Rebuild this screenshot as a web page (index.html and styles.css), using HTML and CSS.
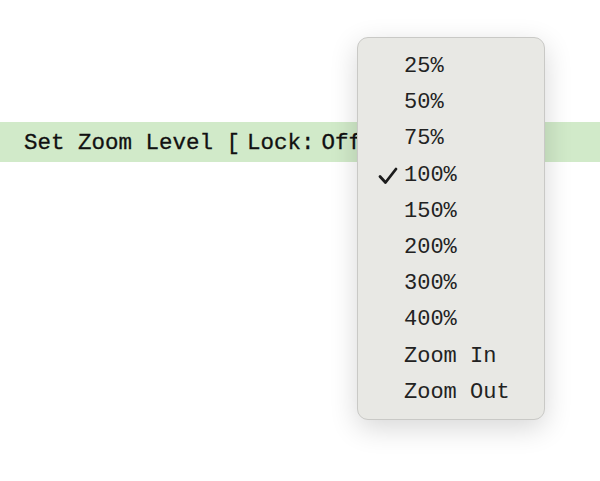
FILE: index.html
```html
<!DOCTYPE html>
<html lang="en">
<head>
    <meta charset="UTF-8">
    <meta name="viewport" content="width=device-width, initial-scale=1.0">
    <title>Set Zoom Level</title>
    <link rel="stylesheet" href="styles.css">
</head>
<body>

    <div class="bar">Set Zoom Level <span class="lock">[ Lock: Off</span></div>

    <ul class="menu">
        <li>25%</li>
        <li>50%</li>
        <li>75%</li>
        <li class="checked">
            <svg class="check" width="20" height="18" viewBox="0 0 20 18"><path d="M2 9.5 L7.5 15.5 L18 2" fill="none" stroke="#1c1c1c" stroke-width="2.8" stroke-linecap="round" stroke-linejoin="round"/></svg>
            100%
        </li>
        <li>150%</li>
        <li>200%</li>
        <li>300%</li>
        <li>400%</li>
        <li>Zoom In</li>
        <li>Zoom Out</li>
    </ul>

</body>
</html>
```

FILE: styles.css
```css
body {
    margin: 0;
    padding-top: 122px;
    background: #fff;
    font-family: "Liberation Mono", "Courier New", monospace;
    color: #111;
}

.bar {
    height: 40px;
    line-height: 42px;
    padding-left: 24px;
    background-color: #d1eac9;
    font-size: 22.5px;
    white-space: nowrap;
    overflow: hidden;
    -webkit-text-stroke: 0.3px #111;
}

.lock {
    word-spacing: -6.5px;
}

.menu {
    position: absolute;
    left: 357px;
    top: 37px;
    width: 188px;
    height: 383px;
    margin: 0;
    padding: 11px 0 10px 0;
    box-sizing: border-box;
    list-style: none;
    background: #e8e8e4;
    border: 1px solid #c9c9c6;
    border-radius: 11px;
    box-shadow: 0 8px 28px rgba(0, 0, 0, 0.16);
}

.menu li {
    position: relative;
    height: 36.2px;
    line-height: 36.2px;
    padding-left: 46px;
    font-size: 22px;
    color: #222;
}

.check {
    position: absolute;
    left: 20px;
    top: 9px;
}
```
